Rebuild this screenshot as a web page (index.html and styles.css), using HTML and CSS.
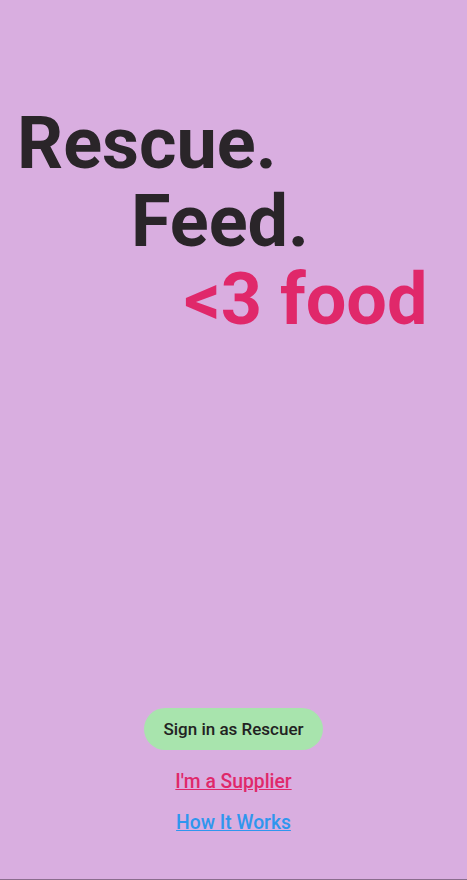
FILE: index.html
```html
<!DOCTYPE html>
<html>
<head>
<meta charset="utf-8">
<link rel="stylesheet" href="styles.css">
</head>
<body>
<main class="screen">
  <section class="hero">
    <div class="line line-1">Rescue.</div>
    <div class="line line-2">Feed.</div>
    <div class="line line-3">&lt;3 food</div>
  </section>
  <section class="actions">
    <button class="btn-primary">Sign in as Rescuer</button>
    <a class="link link-supplier" href="#">I'm a Supplier</a>
    <a class="link link-how" href="#">How It Works</a>
  </section>
</main>
</body>
</html>
```
FILE: styles.css
```css
html, body {
  margin: 0;
  padding: 0;
}
body {
  background: #d9aee0;
  font-family: Roboto, "Noto Sans", sans-serif;
}
.screen {
  box-sizing: border-box;
  height: 880px;
  display: flex;
  flex-direction: column;
  border-bottom: 1px solid #8a6d8d;
}
.hero {
  padding-top: 105px;
}
.line {
  font-size: 72px;
  font-weight: 700;
  line-height: 78px;
  white-space: nowrap;
  color: #2a2529;
}
.line-1 { padding-left: 17px; }
.line-2 { padding-left: 131px; }
.line-3 { padding-left: 184px; color: #e0286a; }
.actions {
  margin-top: auto;
  padding-bottom: 45px;
  display: flex;
  flex-direction: column;
  align-items: center;
}
.btn-primary {
  border: none;
  background: #a8e4ad;
  color: #222222;
  font-family: Roboto, sans-serif;
  font-size: 17px;
  font-weight: 500;
  height: 42px;
  padding: 0 19px;
  border-radius: 21px;
  margin-bottom: 21px;
}
.link {
  font-size: 19.3px;
  font-weight: 500;
  line-height: 22px;
  text-decoration: underline;
}
.link-supplier { color: #e0286a; margin-bottom: 19px; }
.link-how { color: #2f96ee; }
```
